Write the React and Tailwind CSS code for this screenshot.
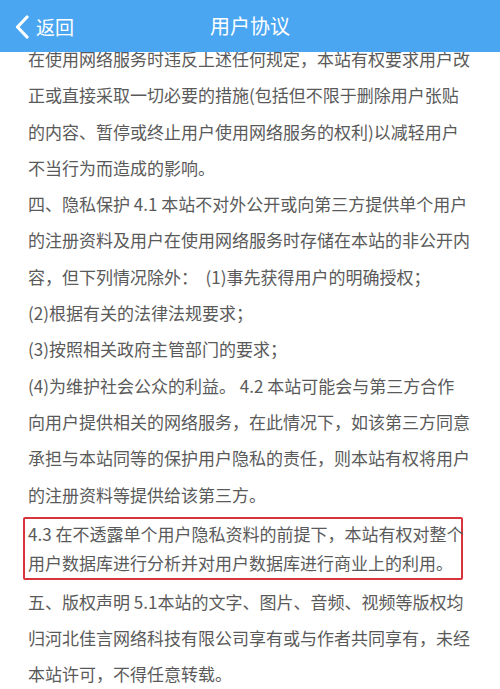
import React from "react";

const font = { fontFamily: '"Noto Sans CJK SC", "Noto Sans", sans-serif' };

const before = [
  "在使用网络服务时违反上述任何规定，本站有权要求用户改",
  "正或直接采取一切必要的措施(包括但不限于删除用户张贴",
  "的内容、暂停或终止用户使用网络服务的权利)以减轻用户",
  "不当行为而造成的影响。",
  "四、隐私保护 4.1 本站不对外公开或向第三方提供单个用户",
  "的注册资料及用户在使用网络服务时存储在本站的非公开内",
  "容，但下列情况除外：  (1)事先获得用户的明确授权；",
  "(2)根据有关的法律法规要求；",
  "(3)按照相关政府主管部门的要求；",
  "(4)为维护社会公众的利益。 4.2 本站可能会与第三方合作",
  "向用户提供相关的网络服务，在此情况下，如该第三方同意",
  "承担与本站同等的保护用户隐私的责任，则本站有权将用户",
  "的注册资料等提供给该第三方。",
];
const boxed = [
  "4.3 在不透露单个用户隐私资料的前提下，本站有权对整个",
  "用户数据库进行分析并对用户数据库进行商业上的利用。",
];
const after = [
  "五、版权声明 5.1本站的文字、图片、音频、视频等版权均",
  "归河北佳言网络科技有限公司享有或与作者共同享有，未经",
  "本站许可，不得任意转载。",
];

function Line({ t }) {
  return <div className="whitespace-pre h-[36.3px] leading-[36.3px]">{t}</div>;
}

export default function App() {
  return (
    <div className="w-[500px] h-[689px] bg-white overflow-hidden flex flex-col" style={font}>
      <div className="h-[52px] shrink-0 bg-[#4ba6f2] flex items-center relative z-10 text-white">
        <div className="flex items-center pl-[14px]">
          <svg width="16" height="24" viewBox="0 0 16 24" className="mt-[1px]">
            <path d="M13 2 L3.5 12 L13 22" fill="none" stroke="white" strokeWidth="3.2" strokeLinecap="round" strokeLinejoin="round" />
          </svg>
          <span className="text-[19px] ml-[6px] leading-none">返回</span>
        </div>
        <div className="absolute left-0 right-0 text-center text-[20px] leading-none pointer-events-none">用户协议</div>
      </div>
      <div className="flex-1 overflow-hidden">
        <div className="-mt-[11px] text-[17px] text-[#5a5a5a] pl-[28px]">
          {before.map((t, i) => (
            <Line key={i} t={t} />
          ))}
          <div className="-ml-[5px] w-[440px] border-2 border-[#d8343c] rounded-[2px] pl-[3px] mt-[4px] mb-[4px]">
            {boxed.map((t, i) => (
              <div key={i} className="whitespace-pre h-[29.5px] leading-[29.5px]">{t}</div>
            ))}
          </div>
          {after.map((t, i) => (
            <Line key={i} t={t} />
          ))}
        </div>
      </div>
    </div>
  );
}
